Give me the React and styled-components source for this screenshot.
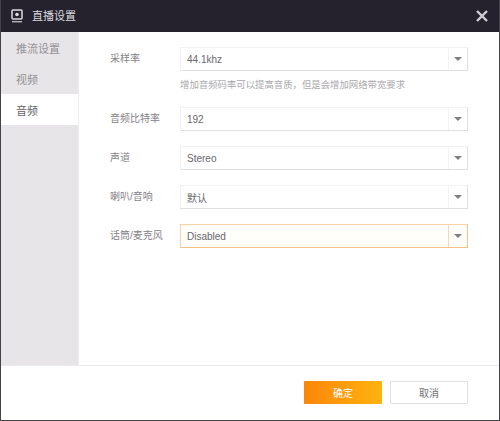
import React from "react";
import styled, { createGlobalStyle } from "styled-components";

const Global = createGlobalStyle`
  html, body { margin: 0; padding: 0; background: #fff; }
  * { box-sizing: border-box; }
`;
const FONT = `"Liberation Sans", "Noto Sans CJK SC", sans-serif`;

const Window = styled.div`
  width: 500px; height: 421px; display: flex; flex-direction: column;
  border: 1px solid #45434a; border-top: 0; background: #fff;
  font-family: ${FONT}; overflow: hidden;
`;
const Header = styled.header`
  height: 32px; flex: none; margin: 0 -1px; padding: 0 12px 0 11px;
  background: #25222e; display: flex; align-items: center;
`;
const Title = styled.h1`
  margin: 0 0 0 9px; font-size: 11px; font-weight: 400; color: #dcdbdf; flex: 1; line-height: 16px;
`;
const Body = styled.div`flex: 1; display: flex; min-height: 0;`;
const Sidebar = styled.nav`
  width: 78px; flex: none; background: #e7e5e7; display: flex; flex-direction: column;
  border-right: 1px solid #eeedee;
`;
const Tab = styled.div`
  height: 31px; padding-left: 15px; display: flex; align-items: center;
  font-size: 11px; color: ${p => (p.$active ? "#666" : "#939195")};
  background: ${p => (p.$active ? "#fff" : "transparent")};
`;
const Content = styled.main`flex: 1; padding: 15px 31px 0 31px;`;
const Row = styled.div`
  display: flex; align-items: center; height: 24px; margin-bottom: ${p => p.$mb ?? 15}px;
`;
const Label = styled.label`width: 70px; flex: none; font-size: 10px; line-height: 12px; padding-bottom: 1px; color: #858388;`;
const Select = styled.div`
  width: 288px; height: 24px; display: flex; font-size: 10px; color: #69676c;
  border: 1px solid ${p => (p.$focus ? "#f8d2a6" : "#f1f0f2")};
  border-bottom-color: ${p => (p.$focus ? "#f4c088" : "#e0dee3")};
  border-right-color: ${p => (p.$focus ? "#f4c088" : "#e0dee3")};
  background: ${p => (p.$focus ? "#fffefb" : "#fff")};
`;
const Value = styled.div`flex: 1; padding-left: 6px; display: flex; align-items: center;`;
const Arrow = styled.div`
  width: 19px; flex: none; display: flex; align-items: center; justify-content: center;
  border-left: 1px solid ${p => (p.$focus ? "#f8d7b2" : "#f3f2f4")};
  &::after {
    content: ""; width: 0; height: 0; border-style: solid; border-width: 4px 4px 0 4px;
    border-color: #808084 transparent transparent transparent;
  }
`;
const Hint = styled.p`
  margin: 7px 0 15px 70px; height: 14px; font-size: 9.4px; line-height: 14px; color: #aaa8ad; white-space: nowrap;
`;
const Footer = styled.footer`
  height: 55px; flex: none; display: flex; justify-content: flex-end; align-items: flex-start; gap: 8px;
  padding: 15px 31px 0 0; border-top: 1px solid #ebeaec;
`;
const Button = styled.button`
  width: 78px; height: 23px; padding: 0; font-family: ${FONT}; font-size: 10px; border-radius: 1px;
  border: ${p => (p.$primary ? "0" : "1px solid #e2e0e4")};
  color: ${p => (p.$primary ? "#fff" : "#737176")};
  background: ${p => (p.$primary ? "linear-gradient(90deg, #fb8609, #ffb30f)" : "#fff")};
`;

const Camera = () => (
  <svg width="12" height="14" viewBox="0 0 12 14" fill="none">
    <rect x="1" y="1" width="10" height="9" rx="1" stroke="#dcdbdf" strokeWidth="1.5" />
    <circle cx="6" cy="5.5" r="1.8" fill="#dcdbdf" />
    <rect x="1" y="12.2" width="10" height="1.1" fill="#dcdbdf" />
  </svg>
);
const Close = () => (
  <svg width="12" height="12" viewBox="0 0 12 12">
    <path d="M1 1L11 11M11 1L1 11" stroke="#cfced2" strokeWidth="2.4" />
  </svg>
);

const Field = ({ label, value, focus, mb }) => (
  <Row $mb={mb}>
    <Label>{label}</Label>
    <Select $focus={focus}>
      <Value>{value}</Value>
      <Arrow $focus={focus} />
    </Select>
  </Row>
);

export default function App() {
  return (
    <>
      <Global />
      <Window>
        <Header>
          <Camera />
          <Title>直播设置</Title>
          <Close />
        </Header>
        <Body>
          <Sidebar>
            <Tab>推流设置</Tab>
            <Tab>视频</Tab>
            <Tab $active>音频</Tab>
          </Sidebar>
          <Content>
            <Field label="采样率" value="44.1khz" mb={0} />
            <Hint>增加音频码率可以提高音质，但是会增加网络带宽要求</Hint>
            <Field label="音频比特率" value="192" />
            <Field label="声道" value="Stereo" />
            <Field label="喇叭/音响" value="默认" />
            <Field label="话筒/麦克风" value="Disabled" focus />
          </Content>
        </Body>
        <Footer>
          <Button $primary>确定</Button>
          <Button>取消</Button>
        </Footer>
      </Window>
    </>
  );
}
